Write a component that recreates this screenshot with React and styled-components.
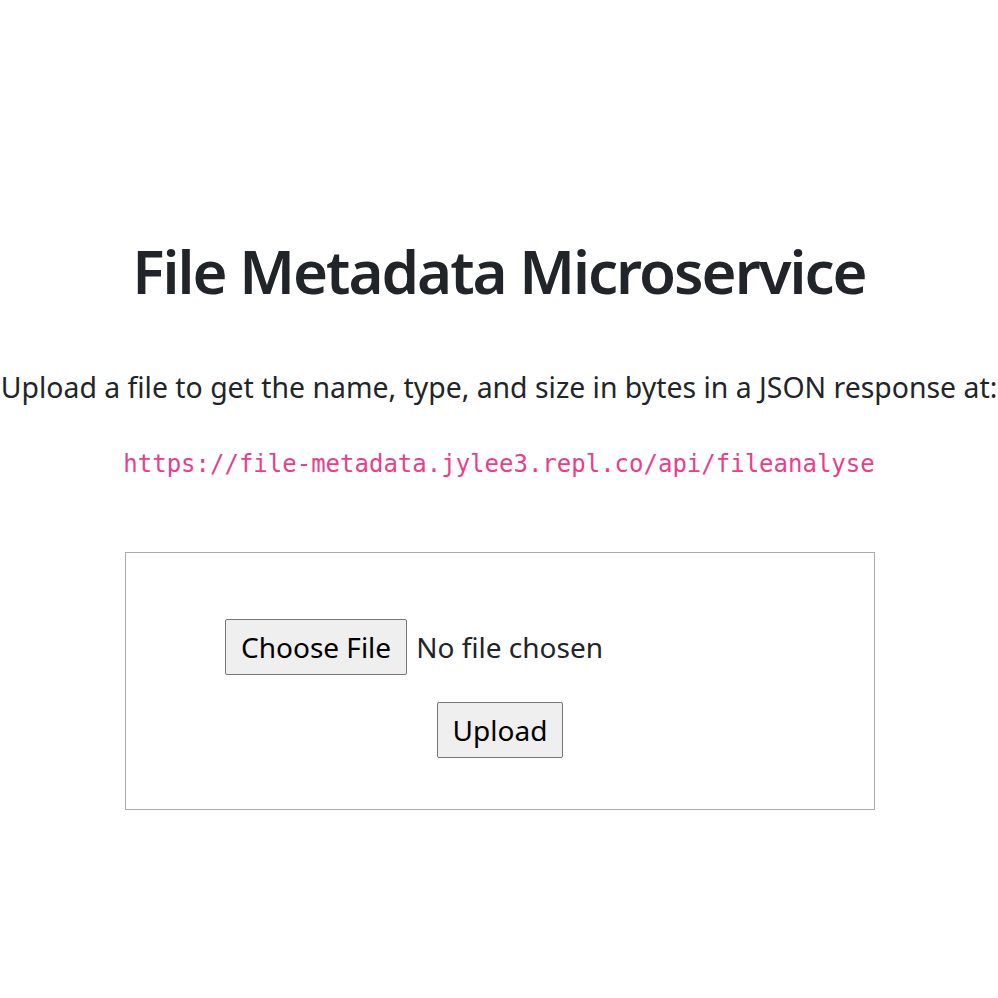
import styled, { createGlobalStyle } from "styled-components";

const GlobalStyle = createGlobalStyle`
  body {
    margin: 0;
    background: #fff;
    color: #212529;
    font-family: "Noto Sans", "Open Sans", sans-serif;
  }
`;

const Page = styled.div`
  display: flex;
  flex-direction: column;
  align-items: center;
  padding-top: 231px;
`;

const Title = styled.h1`
  margin: 0;
  font-size: 60px;
  font-weight: 600;
  letter-spacing: -2px;
  line-height: 80px;
  text-align: center;
`;

const Lead = styled.p`
  margin: 56px 0 0;
  font-size: 28.4px;
  line-height: 40px;
  white-space: nowrap;
  text-align: center;
`;

const Endpoint = styled.code`
  display: block;
  margin-top: 42px;
  font-family: "DejaVu Sans Mono", "Liberation Mono", monospace;
  font-size: 24px;
  line-height: 30px;
  color: #e83e8c;
`;

const Box = styled.form`
  box-sizing: border-box;
  width: 750px;
  margin: 73px 0 0 2px;
  border: 1px solid #aaa;
  padding: 66px 0 51px;
  display: flex;
  flex-direction: column;
  align-items: center;
  gap: 27px;
`;

const FileRow = styled.div`
  align-self: stretch;
  padding-left: 99px;
  display: flex;
  align-items: center;
  gap: 9px;
`;

const Btn = styled.button`
  box-sizing: border-box;
  height: 56px;
  padding: 0 15px;
  font-family: "Noto Sans", sans-serif;
  font-size: 28px;
  color: #000;
  background: #efefef;
  border: 1px solid #767676;
  border-radius: 2px;
`;

const FileName = styled.span`
  font-size: 28px;
  color: #212529;
`;

export default function App() {
  return (
    <>
      <GlobalStyle />
      <Page>
        <Title>File Metadata Microservice</Title>
        <Lead>Upload a file to get the name, type, and size in bytes in a JSON response at:</Lead>
        <Endpoint>https://file-metadata.jylee3.repl.co/api/fileanalyse</Endpoint>
        <Box onSubmit={(e) => e.preventDefault()}>
          <FileRow>
            <Btn type="button">Choose File</Btn>
            <FileName>No file chosen</FileName>
          </FileRow>
          <Btn type="submit">Upload</Btn>
        </Box>
      </Page>
    </>
  );
}
